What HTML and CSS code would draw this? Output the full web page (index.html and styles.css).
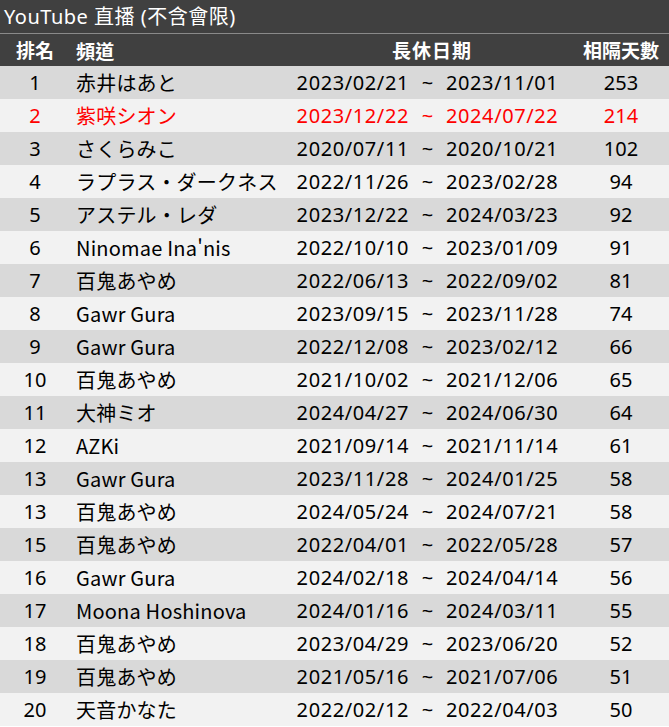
FILE: index.html
```html
<!DOCTYPE html>
<html lang="zh-Hant">
<head>
<meta charset="utf-8">
<title>YouTube 直播</title>
<link rel="stylesheet" href="styles.css">
</head>
<body>
<div class="sheet">
  <div class="title">YouTube 直播 (不含會限)</div>
  <div class="row head">
    <div class="c-rank">排名</div>
    <div class="c-name">頻道</div>
    <div class="c-period">長休日期</div>
    <div class="c-days">相隔天數</div>
  </div>
  <div id="rows"></div>
</div>
<script src="app.js"></script>
</body>
</html>
```
FILE: app.js
```js
const data = [
  ["1","赤井はあと","2023/02/21","2023/11/01","253"],
  ["2","紫咲シオン","2023/12/22","2024/07/22","214"],
  ["3","さくらみこ","2020/07/11","2020/10/21","102"],
  ["4","ラプラス・ダークネス","2022/11/26","2023/02/28","94"],
  ["5","アステル・レダ","2023/12/22","2024/03/23","92"],
  ["6","Ninomae Ina'nis","2022/10/10","2023/01/09","91"],
  ["7","百鬼あやめ","2022/06/13","2022/09/02","81"],
  ["8","Gawr Gura","2023/09/15","2023/11/28","74"],
  ["9","Gawr Gura","2022/12/08","2023/02/12","66"],
  ["10","百鬼あやめ","2021/10/02","2021/12/06","65"],
  ["11","大神ミオ","2024/04/27","2024/06/30","64"],
  ["12","AZKi","2021/09/14","2021/11/14","61"],
  ["13","Gawr Gura","2023/11/28","2024/01/25","58"],
  ["13","百鬼あやめ","2024/05/24","2024/07/21","58"],
  ["15","百鬼あやめ","2022/04/01","2022/05/28","57"],
  ["16","Gawr Gura","2024/02/18","2024/04/14","56"],
  ["17","Moona Hoshinova","2024/01/16","2024/03/11","55"],
  ["18","百鬼あやめ","2023/04/29","2023/06/20","52"],
  ["19","百鬼あやめ","2021/05/16","2021/07/06","51"],
  ["20","天音かなた","2022/02/12","2022/04/03","50"]
];
const host = document.getElementById("rows");
data.forEach((d, i) => {
  const r = document.createElement("div");
  r.className = "row body " + (i % 2 === 0 ? "odd" : "even") + (d[1] === "紫咲シオン" ? " hl" : "");
  const cells = [["c-rank", d[0]], ["c-name", d[1]], ["c-start", d[2]], ["c-tilde", "~"], ["c-end", d[3]], ["c-days", d[4]]];
  cells.forEach(([cls, txt]) => {
    const c = document.createElement("div");
    c.className = cls;
    c.textContent = txt;
    r.appendChild(c);
  });
  host.appendChild(r);
});
```
FILE: styles.css
```css
html, body {
  margin: 0;
  padding: 0;
  background: #ffffff;
}
.sheet {
  width: 669px;
  font-family: "Noto Sans", "Noto Sans CJK TC", "Noto Sans CJK JP", sans-serif;
  font-size: 20px;
  color: #000;
}
.title {
  height: 34px;
  line-height: 33px;
  background: #404040;
  color: #ffffff;
  padding-left: 4px;
  font-size: 20px;
  letter-spacing: 0.5px;
  border-bottom: 1px solid #8a8a8a;
  box-sizing: border-box;
}
.row {
  display: grid;
  grid-template-columns: 70px 200px 139px 37px 134px 82px 7px;
  height: 33px;
  align-items: center;
}
.head {
  background: #404040;
  color: #ffffff;
  font-weight: 700;
  height: 32px;
  font-size: 19px;
}
.odd { background: #d9d9d9; }
.even { background: #f2f2f2; }
.hl { color: #ff0000; }
.c-rank { text-align: center; }
.c-name {
  padding-left: 6px;
  white-space: nowrap;
  font-family: "Noto Sans CJK JP", sans-serif;
  letter-spacing: 0.2px;
}
.c-start { text-align: right; letter-spacing: 0.6px; }
.c-tilde { text-align: center; }
.c-end { text-align: left; letter-spacing: 0.6px; }
.c-days { text-align: center; }
.head .c-period {
  grid-column: 3 / 6;
  text-align: center;
  padding-left: 14px;
  letter-spacing: 1px;
}
.head .c-days { grid-column: 6 / 7; }
```
